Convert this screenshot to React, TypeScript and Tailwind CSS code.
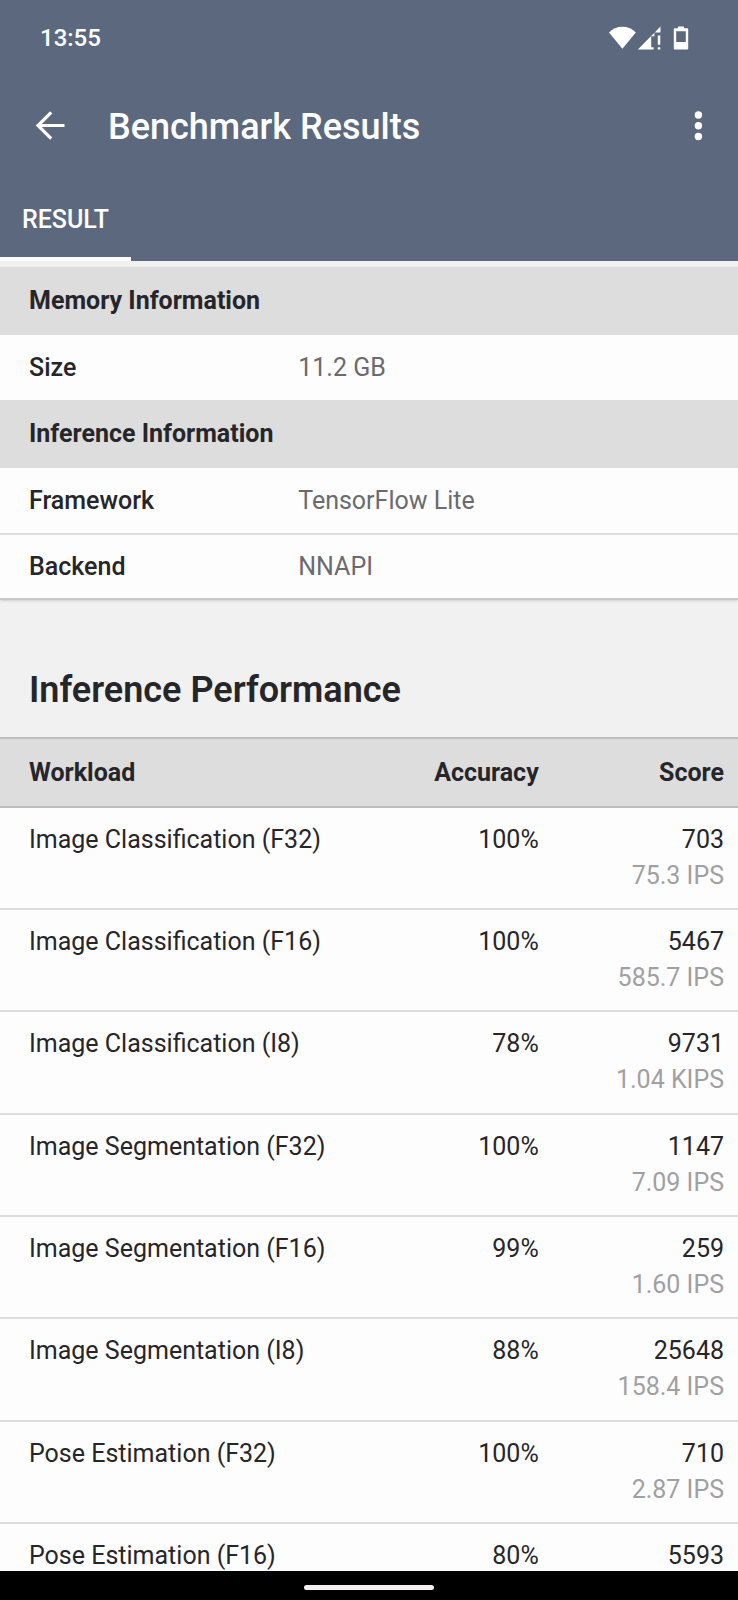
type Workload = { name: string; accuracy: string; score: string; rate: string };

const workloads: Workload[] = [
  { name: "Image Classification (F32)", accuracy: "100%", score: "703", rate: "75.3 IPS" },
  { name: "Image Classification (F16)", accuracy: "100%", score: "5467", rate: "585.7 IPS" },
  { name: "Image Classification (I8)", accuracy: "78%", score: "9731", rate: "1.04 KIPS" },
  { name: "Image Segmentation (F32)", accuracy: "100%", score: "1147", rate: "7.09 IPS" },
  { name: "Image Segmentation (F16)", accuracy: "99%", score: "259", rate: "1.60 IPS" },
  { name: "Image Segmentation (I8)", accuracy: "88%", score: "25648", rate: "158.4 IPS" },
  { name: "Pose Estimation (F32)", accuracy: "100%", score: "710", rate: "2.87 IPS" },
  { name: "Pose Estimation (F16)", accuracy: "80%", score: "5593", rate: "" },
];

function StatusIcons() {
  return (
    <div className="flex items-center" aria-hidden="true">
      <svg className="h-6 w-7" viewBox="0 0 28 24" fill="currentColor">
        <path d="M1 6.600C4.400 2.700 9.300 0.700 14.400 0.700s10 2 13.400 5.900L14.400 22.700z" />
      </svg>
      <svg className="ml-px h-6 w-6" viewBox="0 0 24 24" fill="currentColor">
        <path d="M23.500 0.600v5.800h-5.800z" />
        <path d="M0.800 23.600L17.400 6.800v3.400h-3.200v11h2.400v2.400z" />
        <path d="M20.800 9.400h2.500v9.400h-2.500zM20.800 21.200h2.500v2.400h-2.500z" />
      </svg>
      <svg className="ml-3 h-6 w-4" viewBox="0 0 16 24" fill="currentColor">
        <path
          fillRule="evenodd"
          d="M5 0.500h6v1.800h3.200a1 1 0 0 1 1 1v19.200a1 1 0 0 1-1 1H1.800a1 1 0 0 1-1-1V3.300a1 1 0 0 1 1-1H5zM3.200 5.300v10.600h9.600V5.300z"
        />
      </svg>
    </div>
  );
}

function SectionRow({ title }: { title: string }) {
  return (
    <tr className="h-[68px] bg-[#dddddd]">
      <th colSpan={2} scope="colgroup" className="pl-[29px] text-left font-bold">
        {title}
      </th>
    </tr>
  );
}

function InfoRow({ label, value, divider }: { label: string; value: string; divider?: boolean }) {
  return (
    <tr className={divider ? "h-[66px] border-b-2 border-[#dcdcde]" : "h-[65px]"}>
      <th scope="row" className="w-2/5 pl-[29px] text-left font-medium">
        {label}
      </th>
      <td className="pl-[3px] text-[#6a6a6f]">{value}</td>
    </tr>
  );
}

export default function App() {
  return (
    <div className="flex h-screen flex-col bg-[#f1f1f1] font-[Roboto,sans-serif] text-[25px] leading-9 text-[#26262a]">
      <header className="shrink-0 bg-[#5c687e] text-white">
        <div className="flex h-[75px] items-center justify-between pr-[49px] pl-10">
          <time className="text-[24px] font-medium">13:55</time>
          <StatusIcons />
        </div>
        <div className="flex h-[101px] items-center pr-[18px] pl-7">
          <button type="button" aria-label="Back" className="flex h-11 w-11 items-center justify-center">
            <svg className="h-8 w-8" viewBox="0 0 32 32" fill="none" stroke="currentColor" strokeWidth="3.2">
              <path d="M30.500 15.500H4M17.200 2.300L4 15.500l13.200 13.200" />
            </svg>
          </button>
          <h1 className="ml-9 flex-1 pt-0.5 text-[36px] leading-11 font-medium">Benchmark Results</h1>
          <button type="button" aria-label="More options" className="flex h-11 w-11 items-center justify-center">
            <svg className="h-8 w-8" viewBox="0 0 32 32" fill="currentColor">
              <circle cx="16.400" cy="5" r="3.7" />
              <circle cx="16.400" cy="15.700" r="3.7" />
              <circle cx="16.400" cy="26.500" r="3.7" />
            </svg>
          </button>
        </div>
        <div role="tablist" className="flex h-[85px]">
          <button
            type="button"
            role="tab"
            aria-selected="true"
            className="border-b-4 border-white px-[22px] pt-1.5 font-medium"
          >
            RESULT
          </button>
        </div>
      </header>

      <main className="min-h-0 flex-1 overflow-y-auto pt-1.5 [scrollbar-width:none]">
        <table className="w-full border-collapse border-b-2 border-[#c9c9cb] bg-[#fdfdfd] shadow-sm">
          <tbody>
            <SectionRow title="Memory Information" />
            <InfoRow label="Size" value="11.2 GB" />
            <SectionRow title="Inference Information" />
            <InfoRow label="Framework" value="TensorFlow Lite" divider />
            <InfoRow label="Backend" value="NNAPI" />
          </tbody>
        </table>

        <h2 className="px-[29px] pt-17 pb-[25px] text-[36px] leading-11 font-semibold">Inference Performance</h2>

        <table className="w-full table-fixed border-collapse bg-[#fdfdfd]">
          <thead>
            <tr className="h-[69px] border-t-2 border-b-2 border-[#bebec0] bg-[#dddddd]">
              <th scope="col" className="w-[53%] pl-[29px] text-left font-bold">
                Workload
              </th>
              <th scope="col" className="w-1/5 text-right font-bold">
                Accuracy
              </th>
              <th scope="col" className="pr-3.5 text-right font-bold">
                Score
              </th>
            </tr>
          </thead>
          <tbody>
            {workloads.map((w) => (
              <tr key={w.name} className="h-[102px] border-b-2 border-[#dcdcde] align-top nth-[3n]:h-[103px]">
                <td className="pt-3.5 pl-[29px]">{w.name}</td>
                <td className="pt-3.5 text-right">{w.accuracy}</td>
                <td className="pt-3.5 pr-3.5 text-right">
                  {w.score}
                  <div className="text-[#a0a0a3]">{w.rate}</div>
                </td>
              </tr>
            ))}
          </tbody>
        </table>
      </main>

      <nav className="flex h-[29px] shrink-0 justify-center bg-black pt-3.5">
        <div className="h-[5px] w-[130px] rounded-full bg-[#f1eff0]" />
      </nav>
    </div>
  );
}
